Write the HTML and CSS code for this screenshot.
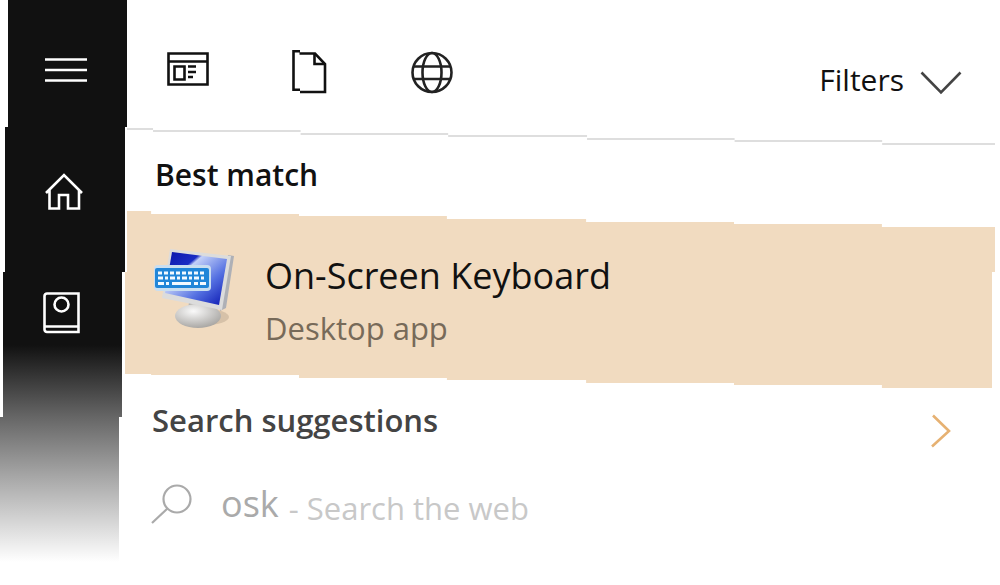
FILE: index.html
```
<!DOCTYPE html>
<html lang="en" dir="ltr">
<head>
    <meta charset="utf-8">
    <title>Search</title>
    <meta name="viewport" content="width=device-width, initial-scale=1.0">
    <link rel="stylesheet" href="styles.css">
</head>
<body>
    <nav class="sidebar">
        <button type="button" class="menu" aria-label="Menu">
            <svg width="42" height="26" viewBox="0 0 42 26" fill="none" stroke="#fff" stroke-width="2.4">
                <path d="M0 2.5h42M0 13h42M0 23.5h42"/>
            </svg>
        </button>
        <a href="#home" class="home" aria-label="Home">
            <svg width="38" height="38" viewBox="0 0 38 38" fill="none" stroke="#fff" stroke-width="2.6">
                <path d="M1 20L19 2l18 18M4.5 17v18.5H14V22h9v13.5h11V17"/>
            </svg>
        </a>
        <a href="#notebook" class="notebook" aria-label="Notebook">
            <svg width="38" height="42" viewBox="0 0 38 42" fill="none" stroke="#fff" stroke-width="2.6">
                <path d="M4 1.5h31.5v38.500H4a2.5 2.5 0 0 1-2.5-2.5V4A2.5 2.5 0 0 1 4 1.5zM2 34.500h33"/>
                <circle cx="18.500" cy="12.500" r="7"/>
            </svg>
        </a>
    </nav>
    <main class="panel">
        <header class="toolbar">
            <button type="button" class="scope" aria-label="Apps">
                <svg width="42" height="44" viewBox="0 0 42 44" fill="none" stroke="#111" stroke-width="2.6">
                    <path d="M1.5 3.500h39v31h-39zM1.5 11.500h39M7.5 16.500h10v13h-10z"/>
                    <path d="M21 16.500h8M21 22h8M21 27h5"/>
                </svg>
            </button>
            <button type="button" class="scope" aria-label="Documents">
                <svg width="42" height="44" viewBox="0 0 42 44" fill="none" stroke="#111" stroke-width="2.6">
                    <path d="M11 1.300H4.500v38.500H11M10.500 3.500h15.500L36 14v28H11"/>
                    <path d="M25.500 4v10h10.500"/>
                </svg>
            </button>
            <button type="button" class="scope" aria-label="Web">
                <svg width="42" height="44" viewBox="0 0 42 44" fill="none" stroke="#222" stroke-width="2.6">
                    <circle cx="21" cy="22.500" r="19.500"/>
                    <ellipse cx="21" cy="22.500" rx="9.500" ry="19.500"/>
                    <path d="M3 16.500h36M3 29h36"/>
                </svg>
            </button>
            <button type="button" class="filters">
                Filters
                <svg width="42" height="30" viewBox="0 0 42 30" fill="none" stroke="#444" stroke-width="2.6">
                    <path d="M1.500 7.500L21 27.500l19.500-20"/>
                </svg>
            </button>
        </header>
        <div class="divider"></div>

        <h2 class="best">Best match</h2>
        <a href="#osk" class="result">
            <svg width="84" height="84" viewBox="0 0 84 84">
                <defs>
                    <linearGradient id="screen" x1="0" y1="0" x2="1" y2="1">
                        <stop offset="0" stop-color="#0814a8"/>
                        <stop offset="0.3" stop-color="#1a2cc4"/>
                        <stop offset="0.34" stop-color="#c3d0f8"/>
                        <stop offset="0.65" stop-color="#5672e2"/>
                        <stop offset="1" stop-color="#0713b0"/>
                    </linearGradient>
                    <radialGradient id="base" cx="0.4" cy="0.3" r="0.7">
                        <stop offset="0" stop-color="#fafafa"/>
                        <stop offset="1" stop-color="#aaa8a5"/>
                    </radialGradient>
                </defs>
                <ellipse cx="52" cy="71" rx="24" ry="8" fill="#bba88f" opacity="0.5"/>
                <path d="M36 56l22 4 2 12H34z" fill="#b5b3b0"/>
                <ellipse cx="45" cy="70" rx="23" ry="12" fill="url(#base)"/>
                <path d="M75 9l6 1-8 52-6 3z" fill="#aeb0b6"/>
                <path d="M17 3l61 7-9 54-60-12z" fill="#dcdcdc"/>
                <path d="M19 6l55 7-8 46-54-12z" fill="url(#screen)"/>
                <path d="M5 19h49a4 4 0 0 1 4 4v18a4 4 0 0 1-4 4H5a4 4 0 0 1-4-4V23a4 4 0 0 1 4-4z" fill="#c9def0"/>
                <rect x="2" y="22" width="54" height="20" rx="2" fill="#2186d8"/>
                <path d="M5 27h48" stroke="#f4faff" stroke-width="3" stroke-dasharray="4 2"/>
                <path d="M5 32h48" stroke="#f4faff" stroke-width="3" stroke-dasharray="5 2 3 2"/>
                <path d="M5 37.500h6M13 37.500h3M19 37.500h19M41 37.500h4M47 37.500h6" stroke="#f4faff" stroke-width="3"/>
            </svg>
            <span class="result-text">
                <span class="name">On-Screen Keyboard</span>
                <span class="kind">Desktop app</span>
            </span>
        </a>

        <div class="suggestions">
            <h2>Search suggestions</h2>
            <a href="#more" aria-label="More suggestions">
                <svg width="20" height="34" viewBox="0 0 20 34" fill="none" stroke="#e6b172" stroke-width="2.6">
                    <path d="M2 1.500L18 17 1 32.500"/>
                </svg>
            </a>
        </div>
        <a href="#web" class="web">
            <svg width="42" height="40" viewBox="0 0 42 40" fill="none" stroke="#aaa" stroke-width="2.2">
                <circle cx="26" cy="15" r="13.500"/>
                <path d="M16.500 24.500L1 39"/>
            </svg>
            <span class="term">osk</span>
            <span class="hint">- Search the web</span>
        </a>
    </main>
</body>
</html>
```

FILE: styles.css
```
* {
    box-sizing: border-box;
}
body {
    margin: 0;
    min-height: 100vh;
    display: flex;
    background-color: #fff;
    color: #111;
    font-family: 'Open Sans', 'Noto Sans', sans-serif;
    font-size: 31px;
}
h2 {
    margin: 0;
    font-size: 31px;
    font-weight: 600;
}
a {
    color: inherit;
    text-decoration: none;
}
button {
    padding: 0;
    border: none;
    background: none;
    color: inherit;
    font: inherit;
    cursor: pointer;
}
svg {
    display: block;
    flex: none;
}

/* the dark rail leans left in steps and fades out at the bottom */
.sidebar {
    flex: none;
    width: 127px;
    display: flex;
    flex-direction: column;
    align-items: flex-start;
    padding: 57px 0 0 43px;
    background: linear-gradient(#111 345px, #666 417px, #aaa 480px, #fff 562px);
    clip-path: polygon(8px 0, 127px 0, 127px 127px, 125px 127px, 125px 272px, 122px 272px, 122px 417px, 119px 417px, 119px 100%, 0 100%, 0 417px, 3px 417px, 3px 272px, 5px 272px, 5px 127px, 8px 127px);
}
.menu {
    margin-left: 2px;
}
.home {
    margin: 90px 0 81px 2px;
}

.panel {
    flex: 1;
    min-width: 0;
}
.toolbar {
    display: flex;
    align-items: flex-start;
    gap: 80px;
    height: 128px;
    padding: 50px 38px 0 40px;
}
.filters {
    display: flex;
    align-items: center;
    gap: 16px;
    margin-left: auto;
    padding-top: 10px;
    font-size: 30px;
    line-height: 40px;
}
.divider {
    height: 17px;
    margin-right: 5px;
    background-color: #dedede;
    clip-path: polygon(0 0, 3% 0, 3% 2px, 20% 2px, 20% 5px, 37% 5px, 37% 7px, 53% 7px, 53% 10px, 70% 10px, 70% 12px, 87% 12px, 87% 15px, 100% 15px, 100% 17px, 87% 17px, 87% 14px, 70% 14px, 70% 12px, 53% 12px, 53% 9px, 37% 9px, 37% 7px, 20% 7px, 20% 4px, 3% 4px, 3% 2px, 0 2px);
}
.best {
    padding: 0 28px;
    font-size: 30px;
    line-height: 60px;
}

.result {
    display: flex;
    align-items: flex-start;
    gap: 28px;
    height: 177px;
    margin: 6px 5px 0 -2px;
    padding: 35px 28px 0;
    background-color: #f1dbc0;
    clip-path: polygon(2px 0, 3% 0, 3% 3px, 20% 3px, 20% 5px, 37% 5px, 37% 8px, 53% 8px, 53% 11px, 70% 11px, 70% 13px, 87% 13px, 87% 16px, 100% 16px, 100% 61px, calc(100% - 3px) 61px, calc(100% - 3px) 100%, 87% 100%, 87% 174px, 70% 174px, 70% 172px, 53% 172px, 53% 169px, 37% 169px, 37% 167px, 20% 167px, 20% 164px, 3% 164px, 3% 163px, 0 163px, 0 61px, 2px 61px);
}
.result-text {
    display: flex;
    flex-direction: column;
    gap: 8px;
    padding-top: 6px;
}
.name {
    font-size: 36px;
    line-height: 48px;
}
.kind {
    color: #776a59;
    line-height: 40px;
}

.suggestions {
    display: flex;
    justify-content: space-between;
    padding: 8px 49px 0 25px;
    line-height: 48px;
    color: #444;
}
.suggestions a {
    padding-top: 18px;
}
.web {
    display: flex;
    align-items: center;
    padding: 28px 24px;
    line-height: 48px;
}
.term {
    margin: 0 10px 0 28px;
    font-size: 36px;
    color: #aaa;
}
.hint {
    padding-top: 8px;
    color: #c8c8c8;
}
```
